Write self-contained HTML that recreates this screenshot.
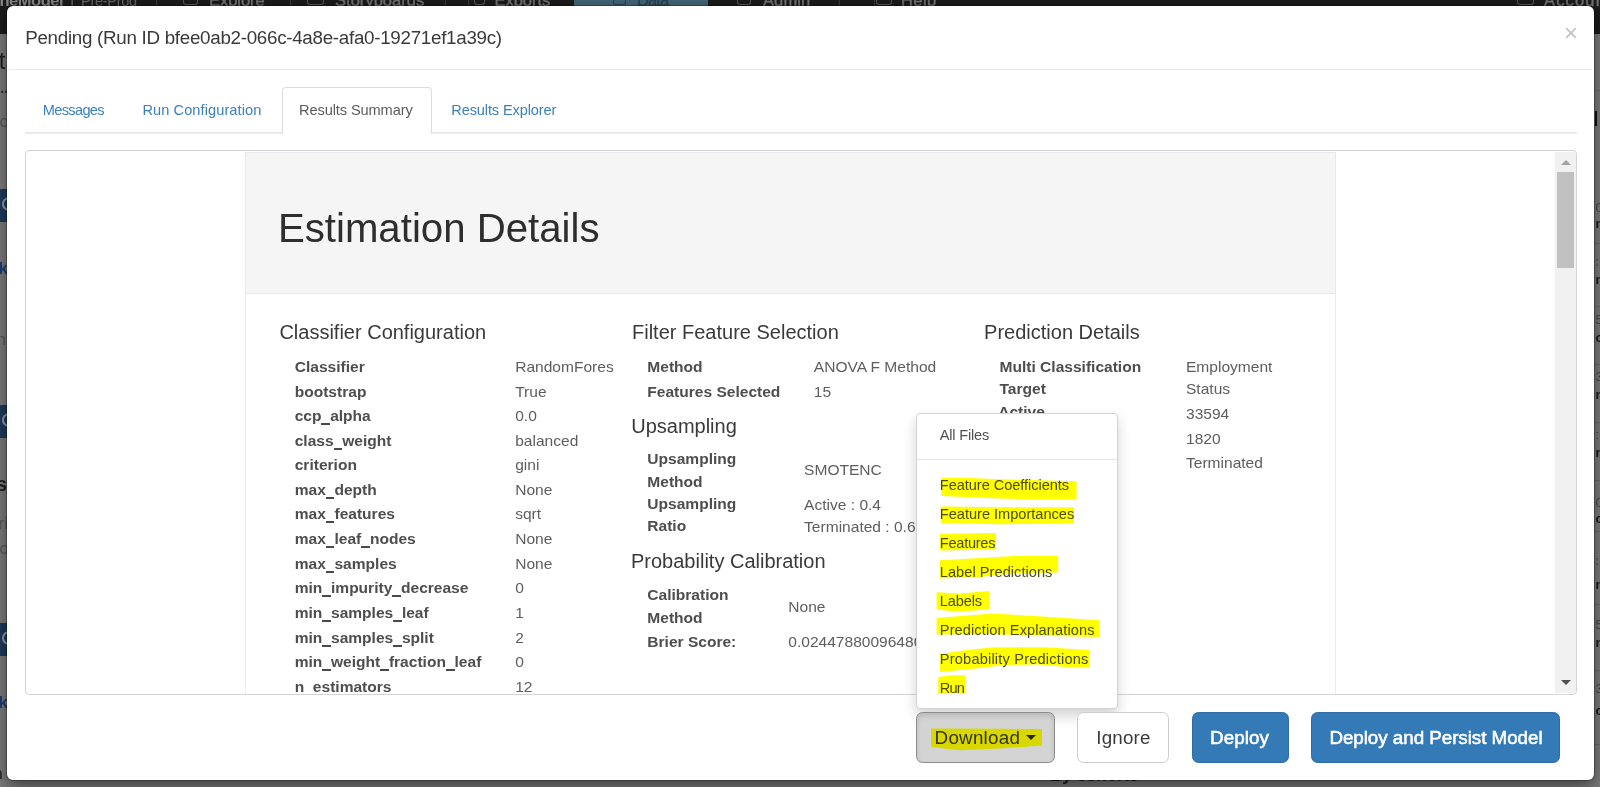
<!DOCTYPE html>
<html><head><meta charset="utf-8"><title>Pending Run</title><style>
*{box-sizing:border-box;margin:0;padding:0}
html,body{width:1600px;height:787px;overflow:hidden}
body{background:#7f7f7f;font-family:"Liberation Sans",sans-serif;position:relative}
.t{position:absolute;white-space:pre;display:block}
.abs{position:absolute}
.u{color:transparent;position:relative}
.u::after{content:'';position:absolute;left:0;right:0;top:16px;height:1.6px;background:#4a4a4a}
#page{position:absolute;left:0;top:0;width:1600px;height:787px;overflow:hidden;will-change:transform}
#nav{position:absolute;left:0;top:0;width:1600px;height:34px;background:#1c1c1c;overflow:hidden}
#nav i{position:absolute;top:0;width:1px;height:34px;background:#3c3c3c}
#nav .act{position:absolute;left:574px;top:0;width:134px;height:34px;background:#45687a}
.blk{position:absolute;left:0;width:8px;background:#1e3c5e}
.blk b{position:absolute;left:2px;top:8px;width:14px;height:14px;border:2px solid #93a0ae;border-radius:50%}
#modal{will-change:transform;position:absolute;left:6px;top:5px;width:1589px;height:776px;background:#fff;background-clip:padding-box;border:1px solid rgba(0,0,0,.25);border-radius:7px;
  box-shadow:0 5.5px 16.5px rgba(0,0,0,.5);}
#hdrline{position:absolute;left:2px;top:63px;width:1583px;height:1px;background:#ececec}
#tabline{position:absolute;left:18px;top:126px;width:1552px;height:2px;background:linear-gradient(#e4e4e4,#efefef)}
#acttab{position:absolute;left:275px;top:81px;width:150px;height:47px;border:1px solid #ddd;border-bottom:0;border-radius:4px 4px 0 0;background:#fff}
#frame{position:absolute;left:18px;top:144px;width:1552px;height:545px;border:1px solid #d4d4d4;border-radius:4px;overflow:hidden;background:#fff}
#jumbo{position:absolute;left:219px;top:1px;width:1091px;height:142px;background:#f5f5f5;border:1px solid #e8e8ee}
.colline{position:absolute;top:143px;width:1px;height:420px;background:#eaeaf0}
#sb{position:absolute;left:1529px;top:1px;width:21px;height:541px;background:#f1f1f1}
#thumb{position:absolute;left:2px;top:20px;width:17px;height:96px;background:#c1c1c1}
.arr{position:absolute;left:5.5px;width:0;height:0;border-left:5px solid transparent;border-right:5px solid transparent}
#dd{position:absolute;left:909px;top:407px;width:202px;height:296px;background:#fff;border:1px solid #d4d4d4;border-radius:4px;box-shadow:0 6.5px 13px rgba(0,0,0,.175)}
#dddiv{position:absolute;left:0;top:45px;width:200px;height:1px;background:#e5e5e5}
.btn{position:absolute;top:706px;height:51px;border-radius:6.5px;border:1px solid}
</style></head><body>
<div id="page">
<div id="nav">
<i style="left:155.8px"></i>
<i style="left:289.5px"></i>
<i style="left:444.5px"></i>
<i style="left:468.0px"></i>
<i style="left:839.4px"></i>
<i style="left:874.0px"></i>
<div class="act"></div>
<span class="t" style="left:-0.50px;top:-9px;font-size:16.5px;line-height:18px;color:#8a8a8a;font-weight:bold;letter-spacing:-0.472px;">neModel</span>
<span class="t" style="left:70.00px;top:-9px;font-size:16.5px;line-height:18px;color:#6a6a6a;">|</span>
<span class="t" style="left:81.00px;top:-7px;font-size:14.5px;line-height:16px;color:#6a6a6a;letter-spacing:-0.28px;">Pre-Prod</span>
<span class="t" style="left:209.00px;top:-9px;font-size:16.5px;line-height:18px;color:#757575;letter-spacing:-0.045px;-webkit-text-stroke:0.4px #757575;">Explore</span>
<span class="t" style="left:335.00px;top:-9px;font-size:16.5px;line-height:18px;color:#757575;letter-spacing:0.029px;-webkit-text-stroke:0.4px #757575;">Storyboards</span>
<span class="t" style="left:494.50px;top:-9px;font-size:16.5px;line-height:18px;color:#757575;letter-spacing:-0.031px;-webkit-text-stroke:0.4px #757575;">Exports</span>
<span class="t" style="left:637.00px;top:-9px;font-size:16.5px;line-height:18px;color:#2b4452;letter-spacing:-0.892px;-webkit-text-stroke:0.4px #2b4452;">Data</span>
<span class="t" style="left:763.00px;top:-9px;font-size:16.5px;line-height:18px;color:#757575;letter-spacing:0.102px;-webkit-text-stroke:0.4px #757575;">Admin</span>
<span class="t" style="left:901.00px;top:-9px;font-size:16.5px;line-height:18px;color:#757575;letter-spacing:0.414px;-webkit-text-stroke:0.4px #757575;">Help</span>
<span class="t" style="left:1544.00px;top:-9px;font-size:16.5px;line-height:18px;color:#757575;letter-spacing:1.161px;-webkit-text-stroke:0.4px #757575;">Account</span>
<div class="abs" style="left:183px;top:0;width:15px;height:4.5px;border:1.5px solid #5a5a5a;border-top:0;border-radius:0 0 3px 3px"></div>
<div class="abs" style="left:307px;top:0;width:17px;height:4.5px;border:1.5px solid #5a5a5a;border-top:0;border-radius:0 0 3px 3px"></div>
<div class="abs" style="left:474px;top:0;width:11px;height:4.5px;border:1.5px solid #5a5a5a;border-top:0;border-radius:0 0 3px 3px"></div>
<div class="abs" style="left:613px;top:0;width:13px;height:4.5px;border:1.5px solid #2b4452;border-top:0;border-radius:0 0 3px 3px"></div>
<div class="abs" style="left:737px;top:0;width:14px;height:4.5px;border:1.5px solid #5a5a5a;border-top:0;border-radius:0 0 3px 3px"></div>
<div class="abs" style="left:876px;top:0;width:16px;height:4.5px;border:1.5px solid #5a5a5a;border-top:0;border-radius:0 0 3px 3px"></div>
<div class="abs" style="left:1517px;top:0;width:17px;height:4.5px;border:1.5px solid #5a5a5a;border-top:0;border-radius:0 0 3px 3px"></div>
</div>
<div class="abs" style="left:0;top:34px;width:8px;height:753px;overflow:hidden">
<span class="t" style="right:2.5px;top:13.0px;font-size:24px;line-height:27px;color:#222;font-weight:normal">et</span>
<span class="t" style="right:0px;top:46.0px;font-size:14px;line-height:16px;color:#333;font-weight:bold">...</span>
<span class="t" style="right:0px;top:78.0px;font-size:17px;line-height:19px;color:#5c5c5c;font-weight:normal">nc</span>
<div class="blk" style="top:155px;height:33px"><b></b></div>
<div class="blk" style="top:371px;height:33px"><b></b></div>
<div class="blk" style="top:589px;height:33px"><b></b></div>
<span class="t" style="right:0px;top:225.0px;font-size:17px;line-height:19px;color:#1b4079;font-weight:bold">ck</span>
<span class="t" style="right:2px;top:296.0px;font-size:17px;line-height:19px;color:#5c5c5c;font-weight:normal">n</span>
<span class="t" style="right:1px;top:439.0px;font-size:20px;line-height:22px;color:#222;font-weight:bold">s</span>
<span class="t" style="right:0px;top:480.0px;font-size:17px;line-height:19px;color:#5c5c5c;font-weight:normal">ri</span>
<span class="t" style="right:0px;top:505.0px;font-size:17px;line-height:19px;color:#5c5c5c;font-weight:normal">nc</span>
<span class="t" style="right:0px;top:659.0px;font-size:17px;line-height:19px;color:#1b4079;font-weight:bold">ck</span>
<span class="t" style="right:5px;top:729.5px;font-size:17px;line-height:19px;color:#333;font-weight:bold">n</span>
</div>
<div class="abs" style="left:1593px;top:34px;width:7px;height:753px;overflow:hidden">
<div class="abs" style="left:2px;top:77px;width:2px;height:15px;background:#111"></div>
<span class="t" style="left:2.5px;top:165.7px;font-size:13px;line-height:16px;color:#4a4a4a;font-weight:normal">0:</span>
<span class="t" style="left:2.5px;top:181.7px;font-size:13px;line-height:16px;color:#1a1a1a;font-weight:bold">ne</span>
<span class="t" style="left:2.5px;top:220.0px;font-size:13px;line-height:16px;color:#4a4a4a;font-weight:normal">::</span>
<span class="t" style="left:2.5px;top:237.7px;font-size:13px;line-height:16px;color:#1a1a1a;font-weight:bold">ne</span>
<span class="t" style="left:2.5px;top:277.7px;font-size:13px;line-height:16px;color:#4a4a4a;font-weight:normal">5:</span>
<span class="t" style="left:2.5px;top:296.0px;font-size:13px;line-height:16px;color:#1a1a1a;font-weight:bold">or</span>
<span class="t" style="left:2.5px;top:335.0px;font-size:13px;line-height:16px;color:#4a4a4a;font-weight:normal">3:</span>
<span class="t" style="left:2.5px;top:353.0px;font-size:13px;line-height:16px;color:#1a1a1a;font-weight:bold">ne</span>
<span class="t" style="left:2.5px;top:393.0px;font-size:13px;line-height:16px;color:#4a4a4a;font-weight:normal">::</span>
<span class="t" style="left:2.5px;top:411.0px;font-size:13px;line-height:16px;color:#1a1a1a;font-weight:bold">ne</span>
<span class="t" style="left:2.5px;top:461.0px;font-size:13px;line-height:16px;color:#4a4a4a;font-weight:normal">0:</span>
<span class="t" style="left:2.5px;top:477.0px;font-size:13px;line-height:16px;color:#1a1a1a;font-weight:bold">or</span>
<span class="t" style="left:2.5px;top:519.0px;font-size:13px;line-height:16px;color:#4a4a4a;font-weight:normal">::</span>
<span class="t" style="left:2.5px;top:542.8px;font-size:13px;line-height:16px;color:#1a1a1a;font-weight:bold">ne</span>
<span class="t" style="left:2.5px;top:583.0px;font-size:13px;line-height:16px;color:#4a4a4a;font-weight:normal">5:</span>
<span class="t" style="left:2.5px;top:601.0px;font-size:13px;line-height:16px;color:#1a1a1a;font-weight:bold">ne</span>
<span class="t" style="left:2.5px;top:647.0px;font-size:13px;line-height:16px;color:#4a4a4a;font-weight:normal">3:</span>
<span class="t" style="left:2.5px;top:668.7px;font-size:13px;line-height:16px;color:#1a1a1a;font-weight:bold">or</span>
<div class="abs" style="left:0;top:56px;width:7px;height:1px;background:#6a6a6a"></div>
<div class="abs" style="left:0;top:209px;width:7px;height:1px;background:#6a6a6a"></div>
<div class="abs" style="left:0;top:272px;width:7px;height:1px;background:#6a6a6a"></div>
<div class="abs" style="left:0;top:330px;width:7px;height:1px;background:#6a6a6a"></div>
<div class="abs" style="left:0;top:388px;width:7px;height:1px;background:#6a6a6a"></div>
<div class="abs" style="left:0;top:446px;width:7px;height:1px;background:#6a6a6a"></div>
<div class="abs" style="left:0;top:497px;width:7px;height:1px;background:#6a6a6a"></div>
<div class="abs" style="left:0;top:570px;width:7px;height:1px;background:#6a6a6a"></div>
<div class="abs" style="left:0;top:636px;width:7px;height:1px;background:#6a6a6a"></div>
<div class="abs" style="left:0;top:710px;width:7px;height:1px;background:#6a6a6a"></div>
</div>
<span class="t" style="left:1050.00px;top:766px;font-size:17px;line-height:19px;color:#1c1c1c;font-weight:bold;">By cohorts</span>
<div id="modal">
<span class="t" style="left:18.20px;top:21px;font-size:18.8px;line-height:21px;color:#3a3a3a;letter-spacing:-0.287px;">Pending (Run ID bfee0ab2-066c-4a8e-afa0-19271ef1a39c)</span>
<svg class="abs" style="left:1558px;top:21px" width="12" height="12" viewBox="0 0 12 12"><path d="M1.2 1.2 L10.8 10.8 M10.8 1.2 L1.2 10.8" stroke="#c4c4c4" stroke-width="1.9" fill="none"/></svg>
<div id="hdrline"></div>
<div id="tabline"></div><div id="acttab"></div>
<span class="t" style="left:35.70px;top:96px;font-size:14.6px;line-height:16px;color:#3b80bb;letter-spacing:-0.659px;">Messages</span>
<span class="t" style="left:135.40px;top:96px;font-size:14.6px;line-height:16px;color:#3b80bb;letter-spacing:0.08px;">Run Configuration</span>
<span class="t" style="left:292.00px;top:96px;font-size:14.6px;line-height:16px;color:#5c5c5c;letter-spacing:-0.104px;">Results Summary</span>
<span class="t" style="left:444.30px;top:96px;font-size:14.6px;line-height:16px;color:#3b80bb;letter-spacing:-0.133px;">Results Explorer</span>
<div id="frame"><div id="jumbo"></div><div class="colline" style="left:219px"></div><div class="colline" style="left:1309px"></div>
<span class="t" style="left:251.90px;top:55px;font-size:40.2px;line-height:45px;color:#2e2e2e;">Estimation Details</span>
<span class="t" style="left:253.40px;top:170px;font-size:20px;line-height:22px;color:#3a3a3a;">Classifier Configuration</span>
<span class="t" style="left:606.00px;top:170px;font-size:20px;line-height:22px;color:#3a3a3a;">Filter Feature Selection</span>
<span class="t" style="left:958.10px;top:170px;font-size:20px;line-height:22px;color:#3a3a3a;">Prediction Details</span>
<span class="t" style="left:605.20px;top:264px;font-size:20px;line-height:22px;color:#3a3a3a;">Upsampling</span>
<span class="t" style="left:605.00px;top:399px;font-size:20px;line-height:22px;color:#3a3a3a;">Probability Calibration</span>
<span class="t" style="left:268.70px;top:207px;font-size:15.55px;line-height:17px;color:#4e4e4e;font-weight:bold;">Classifier</span>
<span class="t" style="left:489.20px;top:207px;font-size:15.55px;line-height:17px;color:#5e5e5e;">RandomFores</span>
<span class="t" style="left:268.70px;top:232px;font-size:15.55px;line-height:17px;color:#4e4e4e;font-weight:bold;">bootstrap</span>
<span class="t" style="left:489.20px;top:232px;font-size:15.55px;line-height:17px;color:#5e5e5e;">True</span>
<span class="t" style="left:268.70px;top:256px;font-size:15.55px;line-height:17px;color:#4e4e4e;font-weight:bold;">ccp<span class="u">_</span>alpha</span>
<span class="t" style="left:489.20px;top:256px;font-size:15.55px;line-height:17px;color:#5e5e5e;">0.0</span>
<span class="t" style="left:268.70px;top:281px;font-size:15.55px;line-height:17px;color:#4e4e4e;font-weight:bold;">class<span class="u">_</span>weight</span>
<span class="t" style="left:489.20px;top:281px;font-size:15.55px;line-height:17px;color:#5e5e5e;">balanced</span>
<span class="t" style="left:268.70px;top:305px;font-size:15.55px;line-height:17px;color:#4e4e4e;font-weight:bold;">criterion</span>
<span class="t" style="left:489.20px;top:305px;font-size:15.55px;line-height:17px;color:#5e5e5e;">gini</span>
<span class="t" style="left:268.70px;top:330px;font-size:15.55px;line-height:17px;color:#4e4e4e;font-weight:bold;">max<span class="u">_</span>depth</span>
<span class="t" style="left:489.20px;top:330px;font-size:15.55px;line-height:17px;color:#5e5e5e;">None</span>
<span class="t" style="left:268.70px;top:354px;font-size:15.55px;line-height:17px;color:#4e4e4e;font-weight:bold;">max<span class="u">_</span>features</span>
<span class="t" style="left:489.20px;top:354px;font-size:15.55px;line-height:17px;color:#5e5e5e;">sqrt</span>
<span class="t" style="left:268.70px;top:379px;font-size:15.55px;line-height:17px;color:#4e4e4e;font-weight:bold;">max<span class="u">_</span>leaf<span class="u">_</span>nodes</span>
<span class="t" style="left:489.20px;top:379px;font-size:15.55px;line-height:17px;color:#5e5e5e;">None</span>
<span class="t" style="left:268.70px;top:404px;font-size:15.55px;line-height:17px;color:#4e4e4e;font-weight:bold;">max<span class="u">_</span>samples</span>
<span class="t" style="left:489.20px;top:404px;font-size:15.55px;line-height:17px;color:#5e5e5e;">None</span>
<span class="t" style="left:268.70px;top:428px;font-size:15.55px;line-height:17px;color:#4e4e4e;font-weight:bold;">min<span class="u">_</span>impurity<span class="u">_</span>decrease</span>
<span class="t" style="left:489.20px;top:428px;font-size:15.55px;line-height:17px;color:#5e5e5e;">0</span>
<span class="t" style="left:268.70px;top:453px;font-size:15.55px;line-height:17px;color:#4e4e4e;font-weight:bold;">min<span class="u">_</span>samples<span class="u">_</span>leaf</span>
<span class="t" style="left:489.20px;top:453px;font-size:15.55px;line-height:17px;color:#5e5e5e;">1</span>
<span class="t" style="left:268.70px;top:478px;font-size:15.55px;line-height:17px;color:#4e4e4e;font-weight:bold;">min<span class="u">_</span>samples<span class="u">_</span>split</span>
<span class="t" style="left:489.20px;top:478px;font-size:15.55px;line-height:17px;color:#5e5e5e;">2</span>
<span class="t" style="left:268.70px;top:502px;font-size:15.55px;line-height:17px;color:#4e4e4e;font-weight:bold;">min<span class="u">_</span>weight<span class="u">_</span>fraction<span class="u">_</span>leaf</span>
<span class="t" style="left:489.20px;top:502px;font-size:15.55px;line-height:17px;color:#5e5e5e;">0</span>
<span class="t" style="left:268.70px;top:527px;font-size:15.55px;line-height:17px;color:#4e4e4e;font-weight:bold;">n<span class="u">_</span>estimators</span>
<span class="t" style="left:489.20px;top:527px;font-size:15.55px;line-height:17px;color:#5e5e5e;">12</span>
<span class="t" style="left:621.30px;top:207px;font-size:15.55px;line-height:17px;color:#4e4e4e;font-weight:bold;">Method</span>
<span class="t" style="left:787.80px;top:207px;font-size:15.55px;line-height:17px;color:#5e5e5e;">ANOVA F Method</span>
<span class="t" style="left:621.30px;top:232px;font-size:15.55px;line-height:17px;color:#4e4e4e;font-weight:bold;">Features Selected</span>
<span class="t" style="left:787.80px;top:232px;font-size:15.55px;line-height:17px;color:#5e5e5e;">15</span>
<span class="t" style="left:621.30px;top:299px;font-size:15.55px;line-height:17px;color:#4e4e4e;font-weight:bold;">Upsampling</span>
<span class="t" style="left:621.30px;top:322px;font-size:15.55px;line-height:17px;color:#4e4e4e;font-weight:bold;">Method</span>
<span class="t" style="left:778.10px;top:310px;font-size:15.55px;line-height:17px;color:#5e5e5e;">SMOTENC</span>
<span class="t" style="left:621.30px;top:344px;font-size:15.55px;line-height:17px;color:#4e4e4e;font-weight:bold;">Upsampling</span>
<span class="t" style="left:621.30px;top:366px;font-size:15.55px;line-height:17px;color:#4e4e4e;font-weight:bold;">Ratio</span>
<span class="t" style="left:778.10px;top:345px;font-size:15.55px;line-height:17px;color:#5e5e5e;">Active : 0.4</span>
<span class="t" style="left:778.10px;top:367px;font-size:15.55px;line-height:17px;color:#5e5e5e;">Terminated : 0.6</span>
<span class="t" style="left:621.30px;top:435px;font-size:15.55px;line-height:17px;color:#4e4e4e;font-weight:bold;">Calibration</span>
<span class="t" style="left:621.30px;top:458px;font-size:15.55px;line-height:17px;color:#4e4e4e;font-weight:bold;">Method</span>
<span class="t" style="left:762.30px;top:447px;font-size:15.55px;line-height:17px;color:#5e5e5e;">None</span>
<span class="t" style="left:621.30px;top:482px;font-size:15.55px;line-height:17px;color:#4e4e4e;font-weight:bold;">Brier Score:</span>
<span class="t" style="left:762.30px;top:482px;font-size:15.55px;line-height:17px;color:#5e5e5e;">0.024478800964804</span>
<span class="t" style="left:973.50px;top:207px;font-size:15.55px;line-height:17px;color:#4e4e4e;font-weight:bold;">Multi Classification</span>
<span class="t" style="left:973.50px;top:229px;font-size:15.55px;line-height:17px;color:#4e4e4e;font-weight:bold;">Target</span>
<span class="t" style="left:1160.00px;top:207px;font-size:15.55px;line-height:17px;color:#5e5e5e;">Employment</span>
<span class="t" style="left:1160.00px;top:229px;font-size:15.55px;line-height:17px;color:#5e5e5e;">Status</span>
<span class="t" style="left:972.20px;top:252px;font-size:15.55px;line-height:17px;color:#4e4e4e;font-weight:bold;">Active</span>
<span class="t" style="left:1160.00px;top:254px;font-size:15.55px;line-height:17px;color:#5e5e5e;">33594</span>
<span class="t" style="left:1160.00px;top:279px;font-size:15.55px;line-height:17px;color:#5e5e5e;">1820</span>
<span class="t" style="left:1160.00px;top:303px;font-size:15.55px;line-height:17px;color:#5e5e5e;">Terminated</span>
<div id="sb"><div class="arr" style="top:7.8px;border-bottom:5px solid #a3a3a3"></div><div id="thumb"></div><div class="arr" style="top:528px;border-top:5px solid #505050"></div></div>
</div>
<div id="dd"><div id="dddiv"></div>
<svg class="abs" style="left:0;top:0" width="200" height="294" viewBox="917 414 200 294">
<polygon fill="#ffff00" points="941.4,477.8 963.0,477.8 1000.0,479.3 1076.5,481.3 1076.5,499.6 1040.0,499.6 1000.0,498.5 941.4,495.9"/>
<polygon fill="#ffff00" points="940.8,506.5 1000.0,507.3 1074.0,507.3 1074.0,523.5 1000.0,524.3 940.8,523.0"/>
<polygon fill="#ffff00" points="940.0,533.8 996.0,533.1 996.0,549.5 940.0,550.4"/>
<polygon fill="#ffff00" points="939.7,560.2 1013.9,556.1 1058.2,556.1 1058.2,572.4 1013.0,573.0 980.0,577.0 939.7,578.5"/>
<polygon fill="#ffff00" points="936.6,592.3 960.0,593.5 989.0,591.0 989.0,609.3 965.0,611.3 950.0,611.0 936.6,609.6"/>
<polygon fill="#ffff00" points="936.6,618.1 991.5,613.5 1050.0,617.0 1099.3,620.2 1099.3,637.0 1050.0,636.0 991.0,634.0 936.6,634.4"/>
<polygon fill="#ffff00" points="939.9,654.0 965.0,650.3 993.6,647.2 1045.0,647.2 1089.1,650.0 1089.1,667.4 1062.2,666.8 1039.4,664.5 1005.0,665.0 970.7,668.9 939.9,671.9"/>
<polygon fill="#ffff00" points="938.2,676.9 951.3,675.2 965.0,675.2 965.0,693.5 938.2,693.5"/>
</svg>
<span class="t" style="left:22.70px;top:13px;font-size:14.6px;line-height:16px;color:#505050;letter-spacing:-0.199px;">All Files</span>
<span class="t" style="left:22.80px;top:63px;font-size:14.6px;line-height:16px;color:#4c4c14;letter-spacing:-0.054px;">Feature Coefficients</span>
<span class="t" style="left:22.80px;top:92px;font-size:14.6px;line-height:16px;color:#4c4c14;letter-spacing:-0.014px;">Feature Importances</span>
<span class="t" style="left:22.80px;top:121px;font-size:14.6px;line-height:16px;color:#4c4c14;letter-spacing:-0.271px;">Features</span>
<span class="t" style="left:22.80px;top:150px;font-size:14.6px;line-height:16px;color:#4c4c14;letter-spacing:0.04px;">Label Predictions</span>
<span class="t" style="left:22.80px;top:179px;font-size:14.6px;line-height:16px;color:#4c4c14;letter-spacing:-0.142px;">Labels</span>
<span class="t" style="left:22.80px;top:208px;font-size:14.6px;line-height:16px;color:#4c4c14;letter-spacing:0.099px;">Prediction Explanations</span>
<span class="t" style="left:22.80px;top:237px;font-size:14.6px;line-height:16px;color:#4c4c14;letter-spacing:0.191px;">Probability Predictions</span>
<span class="t" style="left:22.80px;top:266px;font-size:14.6px;line-height:16px;color:#4c4c14;letter-spacing:-0.878px;">Run</span>
</div>
<div class="btn" style="left:909px;width:139px;background:#d4d4d4;border-color:#8c8c8c;box-shadow:inset 0 3px 5px rgba(0,0,0,.125)"></div>
<svg class="abs" style="left:920px;top:718px" width="120" height="30" viewBox="927 724 120 30"><polygon fill="#d8d800" points="931,728.5 1042,729 1042,745.6 1000,748.4 960,750.3 931,747"/></svg>
<span class="t" style="left:927.60px;top:721px;font-size:18.8px;line-height:21px;color:#33330a;letter-spacing:0.246px;">Download</span>
<div class="abs" style="left:1018.7px;top:729.3px;width:0;height:0;border-left:5px solid transparent;border-right:5px solid transparent;border-top:5.5px solid #2a2a00"></div>
<div class="btn" style="left:1070px;width:92px;background:#fff;border-color:#ccc"></div>
<span class="t" style="left:1089.30px;top:721px;font-size:18.8px;line-height:21px;color:#3a3a3a;letter-spacing:0.178px;">Ignore</span>
<div class="btn" style="left:1184.5px;width:97px;background:#337ab7;border-color:#2e6da4"></div>
<span class="t" style="left:1203.10px;top:721px;font-size:18.8px;line-height:21px;color:#fff;letter-spacing:0.046px;-webkit-text-stroke:0.55px #fff;">Deploy</span>
<div class="btn" style="left:1304px;width:249px;background:#337ab7;border-color:#2e6da4"></div>
<span class="t" style="left:1322.40px;top:721px;font-size:18.8px;line-height:21px;color:#fff;letter-spacing:-0.036px;-webkit-text-stroke:0.55px #fff;">Deploy and Persist Model</span>
</div>
</div>
</body></html>
